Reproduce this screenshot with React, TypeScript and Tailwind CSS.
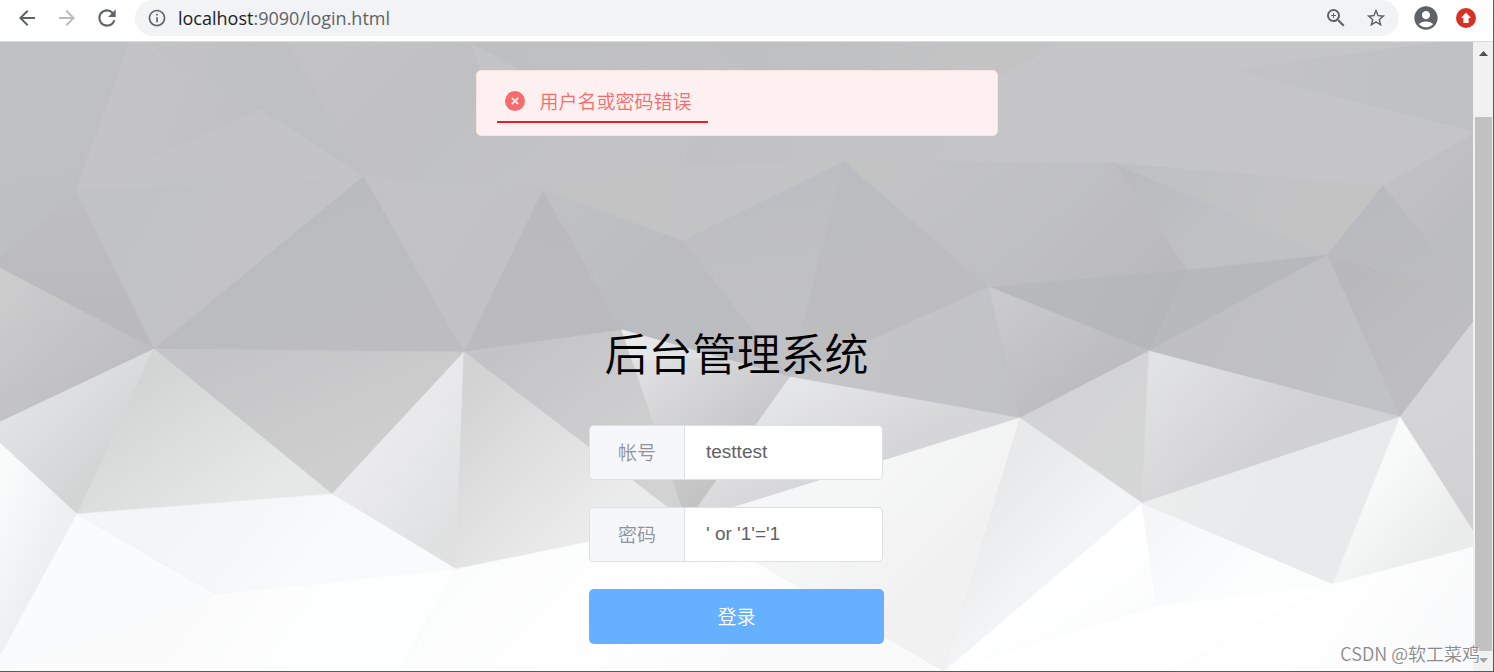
import { useState } from 'react'
import type { ReactNode } from 'react'
import {
  MdAccountCircle,
  MdArrowBack,
  MdArrowForward,
  MdInfoOutline,
  MdRefresh,
  MdStarBorder,
  MdZoomIn,
} from 'react-icons/md'

// points, start colour, end colour, gradient axis (x1 y1 x2 y2)
type Facet = [string, string, string, [number, number, number, number]]

const facets: Facet[] = [
  // upper band
  ['0,42 130,42 76,191 0,258', '#bfc0c1', '#bdbfc3', [0, 42, 30, 220]],
  ['130,42 288,42 364,176 76,191', '#c4c4c6', '#c0c0c2', [120, 80, 260, 130]],
  ['150,42 288,42 364,176 260,110 167,60', '#c2c2c4', '#bec0c1', [170, 50, 270, 80]],
  ['260,110 364,176 76,191', '#c4c4c6', '#c4c4c6', [76, 191, 364, 176]],
  ['288,42 470,42 543,190 364,176', '#c3c3c5', '#c0c0c2', [300, 50, 400, 150]],
  ['400,180 470,42 707,42 685,165 543,190', '#bec0c1', '#c3c3c5', [440, 60, 560, 180]],
  ['470,42 530,75 483,72', '#c4c4c6', '#c3c3c5', [470, 42, 520, 75]],
  ['470,42 707,42 700,80 535,78', '#bdbfc1', '#c0c0c2', [480, 42, 680, 70]],
  ['707,42 1473,42 1473,134 1383,186 1114,163 844,161 685,165', '#c1c1c3', '#c5c5c7', [707, 80, 1000, 120]],
  ['707,42 1050,42 1043,52 940,110 760,85', '#bdbfc0', '#c3c3c4', [760, 42, 960, 100]],
  ['1233,70 1440,42 1473,42 1473,131', '#c3c3c5', '#bec0c1', [1260, 60, 1440, 110]],
  ['685,165 844,161 683,241 543,190', '#c3c3c4', '#c4c4c6', [543, 190, 844, 170]],
  ['76,191 364,176 154,349', '#c0c2c3', '#c3c3c5', [110, 220, 240, 280]],
  ['0,258 76,191 154,349 0,268', '#bababc', '#bebec0', [60, 300, 60, 200]],
  ['364,176 464,352 154,349', '#b9bbbc', '#bdbdbf', [300, 210, 360, 350]],
  ['364,176 543,190 464,352', '#c3c3c5', '#c2c2c4', [364, 176, 500, 260]],
  ['543,190 622,330 464,352', '#bababc', '#bbbbbd', [543, 190, 464, 352]],
  ['543,190 683,241 622,330', '#bfc0c4', '#bbbcc0', [560, 200, 650, 300]],
  ['683,241 790,377 622,330', '#bcbcbf', '#bbbcc0', [683, 241, 700, 350]],
  ['683,241 844,161 790,377', '#bdbec2', '#c1c1c4', [760, 200, 780, 340]],
  ['844,161 989,287 790,377', '#bbbcbf', '#bdbdbf', [850, 180, 900, 330]],
  ['844,161 1114,163 989,287', '#c3c3c4', '#bebfc3', [900, 170, 990, 280]],
  ['1114,163 1188,270 989,287', '#c0c0c3', '#bababd', [1060, 190, 1150, 280]],
  ['1114,163 1327,255 1188,270', '#babbbf', '#c0c1c4', [1130, 180, 1210, 260]],
  ['1114,163 1383,186 1327,255', '#bec0c3', '#c3c3c4', [1150, 170, 1290, 220]],
  ['1383,186 1473,134 1473,298', '#c1c1c3', '#bbbcbf', [1400, 180, 1460, 240]],
  ['1383,186 1473,298 1473,322 1400,417 1327,255', '#b9babe', '#bdbdbf', [1350, 210, 1420, 370]],
  ['1327,255 1473,298 1473,322 1400,417', '#b9b9bb', '#bebec0', [1370, 270, 1440, 350]],
  ['989,287 1188,270 1149,351', '#b8b9ba', '#b5b6b7', [1010, 280, 1150, 340]],
  ['1188,270 1327,255 1149,351', '#b8b9bb', '#b7b8bc', [1170, 300, 1300, 260]],

  // middle band
  ['0,268 154,349 0,422', '#cccccd', '#bfbfc1', [0, 290, 90, 390]],
  ['154,349 464,352 332,494', '#c5c5c7', '#cfcfcf', [280, 340, 340, 480]],
  ['464,352 622,330 687,522', '#c4c4c6', '#d2d2d3', [520, 340, 640, 490]],
  ['622,330 790,377 687,522', '#e2e3e5', '#c4c4c5', [635, 350, 725, 470]],
  ['622,330 712,356 672,360 632,360', '#ececed', '#dfe0e1', [622, 330, 690, 362]],
  ['790,377 989,287 1005,358 1020,418', '#c5c5c7', '#c1c2c6', [840, 350, 1010, 410]],
  ['989,287 1149,351 1020,418', '#cacacc', '#bdbdbf', [1000, 300, 1070, 390]],
  ['1149,351 1327,255 1400,417', '#bfbfc1', '#c1c2c6', [1220, 320, 1370, 390]],
  ['790,377 1020,418 687,522', '#e5e6e7', '#d6d6d8', [800, 385, 840, 470]],
  ['1149,351 1142,503 1020,418', '#d3d3d5', '#d5d6d5', [1050, 400, 1140, 480]],
  ['1149,351 1400,417 1142,503', '#e2e3e5', '#d1d1d3', [1150, 360, 1260, 460]],
  ['1400,417 1473,322 1473,531', '#d5d5d7', '#d1d1d3', [1420, 400, 1473, 500]],

  // lower band
  ['0,422 154,349 77,514 0,443', '#e1e2e4', '#d3d4d4', [30, 400, 100, 470]],
  ['154,349 332,494 77,514', '#d3d4d4', '#e6e7e7', [140, 380, 230, 510]],
  ['464,352 456,569 332,494', '#ebebed', '#dfe1e1', [370, 440, 470, 510]],
  ['464,352 687,522 456,569', '#d3d3d3', '#ebebec', [465, 390, 590, 520]],
  ['0,443 77,514 0,656', '#f9fafa', '#eeeff1', [0, 500, 60, 525]],
  ['77,514 215,594 0,671 0,656', '#f9fbfd', '#fafbfd', [40, 560, 150, 620]],
  ['77,514 332,494 456,569 215,594', '#f4f5f7', '#f9fafb', [200, 510, 300, 590]],
  ['215,594 456,569 400,671 0,671', '#fbfbfb', '#fdfefe', [200, 600, 300, 671]],
  ['456,569 687,522 664,590 600,671 400,671', '#fbfcfc', '#fefefe', [456, 569, 560, 671]],
  ['687,522 944,671 600,671 664,590', '#ffffff', '#fafafa', [690, 560, 760, 671]],
  ['1020,418 944,671 687,522', '#f5f7f6', '#f1f1f1', [860, 480, 940, 560]],
  ['687,522 900,456 780,530', '#f5f6f8', '#f5f7f6', [720, 510, 850, 480]],
  ['1020,418 1142,503 944,671', '#e8e9eb', '#f3f4f6', [1010, 470, 1080, 540]],
  ['1142,503 1157,606 944,671', '#ffffff', '#fbfcfc', [1080, 560, 1120, 620]],
  ['1142,503 1333,584 1157,606', '#f5f6f8', '#fcfdfd', [1150, 520, 1230, 600]],
  ['1142,503 1400,417 1333,584', '#ecedec', '#e9eaec', [1150, 500, 1240, 540]],
  ['1400,417 1473,531 1473,547 1333,584', '#f8f9f9', '#eaebeb', [1370, 490, 1440, 550]],
  ['1333,584 1170,671 944,671 1157,606', '#ffffff', '#ffffff', [1000, 600, 1200, 671]],
  ['1333,584 1473,547 1473,671 1170,671', '#fefefe', '#f9fafb', [1340, 590, 1440, 660]],
]

const Backdrop = () => (
  <svg
    className="absolute inset-0 h-full w-full"
    viewBox="0 42 1473 629"
    preserveAspectRatio="xMidYMid slice"
    aria-hidden="true"
  >
    <defs>
      {facets.map(([, from, to, [x1, y1, x2, y2]], i) => (
        <linearGradient key={i} id={`facet-${i}`} gradientUnits="userSpaceOnUse" x1={x1} y1={y1} x2={x2} y2={y2}>
          <stop offset="0" stopColor={from} />
          <stop offset="1" stopColor={to} />
        </linearGradient>
      ))}
    </defs>
    {facets.map(([points], i) => (
      <polygon key={i} points={points} fill={`url(#facet-${i})`} stroke={`url(#facet-${i})`} strokeWidth="0.6" />
    ))}
  </svg>
)

function IconButton({ label, children }: { label: string; children: ReactNode }) {
  return (
    <button type="button" aria-label={label} className="flex w-10 shrink-0 items-center justify-center text-[#5f6368]">
      {children}
    </button>
  )
}

function Toolbar() {
  return (
    <header className="flex h-[42px] shrink-0 items-start border-b border-[#dadce0] bg-white pl-[7px]">
      <div className="flex h-9 flex-1 items-center">
        <IconButton label="Back">
          <MdArrowBack size={24} />
        </IconButton>
        <IconButton label="Forward">
          <MdArrowForward size={24} className="text-[#babcbe]" />
        </IconButton>
        <IconButton label="Reload">
          <MdRefresh size={26} />
        </IconButton>
        <div className="ml-2 flex h-full flex-1 items-center rounded-full bg-[#f1f3f4] pr-[3px] pl-3">
          <MdInfoOutline size={20} className="shrink-0 text-[#5f6368]" />
          <p className="ml-[11px] flex-1 font-['Open_Sans',sans-serif] text-[18px] leading-6 font-normal text-[#5f6368]">
            <span className="text-[#202124]">localhost</span>:9090/login.html
          </p>
          <IconButton label="Zoom">
            <MdZoomIn size={24} />
          </IconButton>
          <IconButton label="Bookmark">
            <MdStarBorder size={22} />
          </IconButton>
        </div>
        <div className="ml-[7px] flex pr-[7px]">
          <IconButton label="Profile">
            <MdAccountCircle size={28} />
          </IconButton>
          <IconButton label="Update">
            <svg width="20" height="20" viewBox="0 0 20 20">
              <circle cx="10" cy="10" r="10" fill="#d93025" />
              <path d="M10 4.6 15 10h-2.4v5H7.4v-5H5z" fill="#fff" />
            </svg>
          </IconButton>
        </div>
      </div>
    </header>
  )
}

function ErrorToast() {
  return (
    <div
      role="alert"
      className="absolute top-7 left-1/2 flex h-[66px] w-[522px] -translate-x-1/2 items-end rounded-[5px] border border-[#fde2e2] bg-[#fef0f0] px-5 pb-3"
    >
      <div className="flex items-center gap-[15px] border-b-2 border-[#ed1c24] pr-4 pb-2 pl-2">
        <svg width="20" height="20" viewBox="0 0 20 20" aria-hidden="true">
          <circle cx="10" cy="10" r="10" fill="#f56c6c" />
          <path d="m6.8 6.8 6.4 6.4m0-6.4-6.4 6.4" stroke="#fef0f0" strokeWidth="1.7" />
        </svg>
        <p className="text-[19px] leading-6 text-[#f56c6c]">用户名或密码错误</p>
      </div>
    </div>
  )
}

type FieldProps = { id: string; label: string; value: string; onChange: (value: string) => void }

function Field({ id, label, value, onChange }: FieldProps) {
  return (
    <div className="mr-px flex h-[55px] overflow-hidden rounded-[5px] border border-[#dcdfe6] bg-white">
      <label
        htmlFor={id}
        className="flex w-[95px] shrink-0 items-center justify-center border-r border-[#dcdfe6] bg-[#f5f7fa] text-[19px] text-[#909399]"
      >
        {label}
      </label>
      <input
        id={id}
        type="text"
        value={value}
        onChange={(e) => onChange(e.target.value)}
        className="w-full min-w-0 px-[21px] font-['Liberation_Sans',sans-serif] text-[19px] text-[#606266] outline-none"
      />
    </div>
  )
}

function LoginForm() {
  const [account, setAccount] = useState('testtest')
  const [password, setPassword] = useState("' or '1'='1")

  return (
    <form
      onSubmit={(e) => e.preventDefault()}
      className="relative mx-auto flex w-[295px] flex-col gap-[27px] pt-[277px] pb-[26px]"
    >
      <h1 className="mb-[13px] text-center text-[44px] leading-[66px] text-black">后台管理系统</h1>
      <Field id="account" label="帐号" value={account} onChange={setAccount} />
      <Field id="password" label="密码" value={password} onChange={setPassword} />
      <button type="submit" className="h-[55px] rounded-[5px] bg-[#66b1ff] text-[19px] text-white">
        登录
      </button>
    </form>
  )
}

const Scrollbar = () => (
  <div className="flex w-5 shrink-0 flex-col items-center bg-[#f1f1f1] pl-px" aria-hidden="true">
    <svg width="9" height="75" viewBox="0 0 9 75" className="shrink-0">
      <path d="M0 14h9L4.5 9z" fill="#505050" />
    </svg>
    <div className="w-[17px] flex-1 bg-[#c1c1c1]" />
    <svg width="9" height="20" viewBox="0 0 9 20" className="shrink-0">
      <path d="M0 7h9l-4.5 5z" fill="#a3a3a3" />
    </svg>
  </div>
)

export default function App() {
  return (
    <div className="relative flex min-h-screen flex-col border-r border-b border-[#5a5a5a] font-['Noto_Sans_CJK_SC',sans-serif] font-[350]">
      <Toolbar />
      <div className="flex flex-1">
        <main className="relative flex-1 overflow-hidden bg-[#c1c1c3]">
          <Backdrop />
          <LoginForm />
          <ErrorToast />
        </main>
        <Scrollbar />
      </div>
      <p className="pointer-events-none absolute right-[13px] bottom-[6px] text-[18px] leading-6 text-[#8b8b8b] [text-shadow:1px_1px_0_#ffffff]">
        CSDN @软工菜鸡
      </p>
    </div>
  )
}
